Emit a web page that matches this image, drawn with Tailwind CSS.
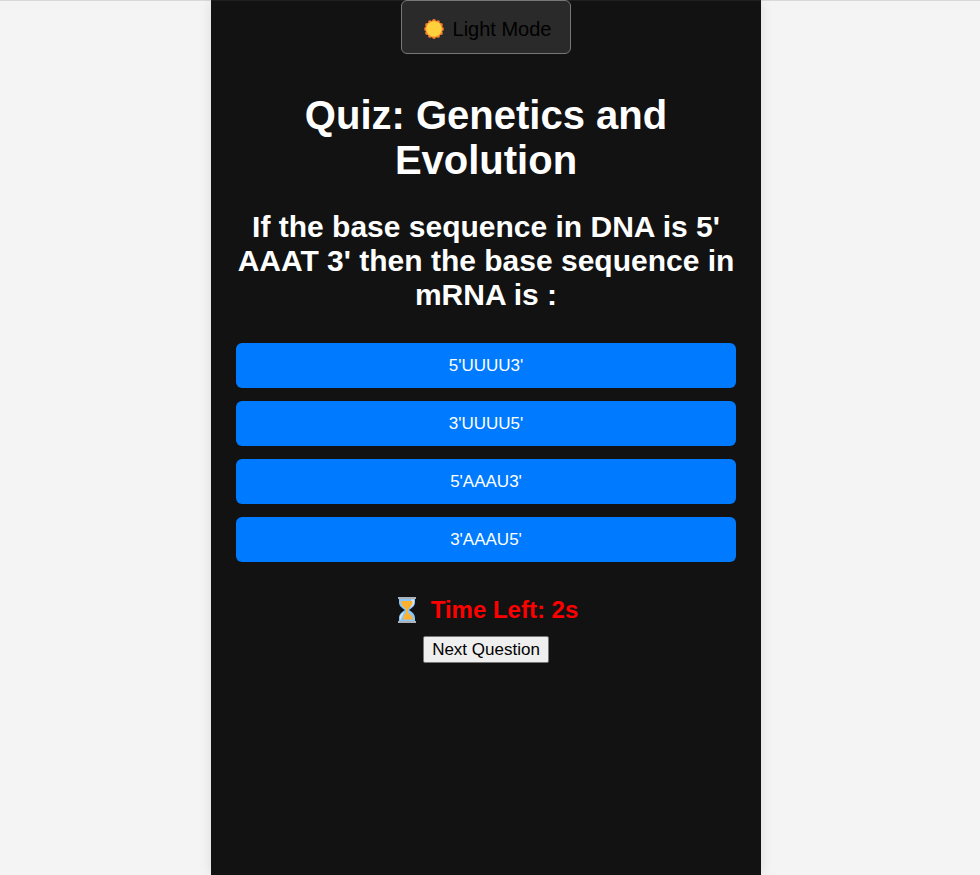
<!DOCTYPE html>
<html lang="en">
<head>
<meta charset="utf-8">
<meta name="viewport" content="width=device-width, initial-scale=1">
<title>Quiz: Genetics and Evolution</title>
<script src="https://cdn.jsdelivr.net/npm/@tailwindcss/browser@4"></script>
</head>
<body class="bg-[#f4f4f4] font-['Liberation_Sans',Arial,sans-serif]">
<div class="flex min-h-screen justify-center border-t border-[#d9d9d9] pr-2">
  <main class="-mt-px flex w-full max-w-[550px] flex-col items-center border-t border-[#1f1f1f] bg-[#121212] px-[25px] pb-6 text-center text-white shadow-[0_0_12px_rgba(0,0,0,0.1)]">
    <button type="button" class="-mt-px flex h-[54px] items-center gap-[9px] rounded-md border border-[#777777] bg-[#2a2a2a] pt-1 pr-[19px] pl-[22px] text-xl text-black">
      <svg class="size-5" viewBox="0 0 20 20" aria-hidden="true">
        <g fill="#f9812a">
          <circle cx="10" cy="10" r="8.6"/>
          <circle cx="10" cy="2" r="1.9"/><circle cx="14" cy="3.1" r="1.9"/><circle cx="16.9" cy="6" r="1.9"/>
          <circle cx="18" cy="10" r="1.9"/><circle cx="16.9" cy="14" r="1.9"/><circle cx="14" cy="16.9" r="1.9"/>
          <circle cx="10" cy="18" r="1.9"/><circle cx="6" cy="16.9" r="1.9"/><circle cx="3.1" cy="14" r="1.9"/>
          <circle cx="2" cy="10" r="1.9"/><circle cx="3.1" cy="6" r="1.9"/><circle cx="6" cy="3.1" r="1.9"/>
        </g>
        <circle cx="10" cy="10" r="7.8" fill="#ffd23d"/>
      </svg>
      Light Mode
    </button>
    <h1 class="mt-[39px] text-[40px] leading-[45px] font-bold">Quiz: Genetics and Evolution</h1>
    <h2 class="mt-[27px] text-[30px] leading-[34px] font-bold">If the base sequence in DNA is 5' AAAT 3' then the base sequence in mRNA is :</h2>
    <div class="mt-[31px] flex w-full flex-col gap-[13px] text-[17px]">
      <button type="button" class="h-[45px] rounded-md bg-[#007bff]">5'UUUU3'</button>
      <button type="button" class="h-[45px] rounded-md bg-[#007bff]">3'UUUU5'</button>
      <button type="button" class="h-[45px] rounded-md bg-[#007bff]">5'AAAU3'</button>
      <button type="button" class="h-[45px] rounded-md bg-[#007bff]">3'AAAU5'</button>
    </div>
    <p class="mt-8 flex items-center gap-[15px] pl-1 text-2xl leading-8 font-bold text-[#ff0000]">
      <svg class="h-[26px] w-[18px]" viewBox="0 0 18 26" aria-hidden="true">
        <path fill="#8ac6f5" d="M1 2h16v3c0 3.500-1.500 5-6 8 4.500 3 6 5 6 8v3H1v-3c0-3 1.500-5 6-8C2.500 10 1 8.500 1 5z"/>
        <path fill="#d3ebfc" d="M13.500 2.500H16V5c0 3-1.500 4-4 5.500zM2 23.500V21c0-3 1.500-4.500 4-6z"/>
        <path fill="#ffb02e" d="M3 4h11.500c.500 3-1.500 5.500-4.500 8v4c3 1.500 4.500 3.500 5 6.500H5c0-3 1-5 3-6.500v-4C5 10 3 7.500 3 4z"/>
        <path fill="#aeb1b7" d="M0 0h18v2H0zM0 24h18v2H0z"/>
      </svg>
      Time Left: 2s
    </p>
    <button type="button" class="mt-[10px] h-[27px] rounded-xs border border-[#767676] bg-[#efefef] px-2 text-[17px] leading-6 text-black">Next Question</button>
  </main>
</div>
</body>
</html>
